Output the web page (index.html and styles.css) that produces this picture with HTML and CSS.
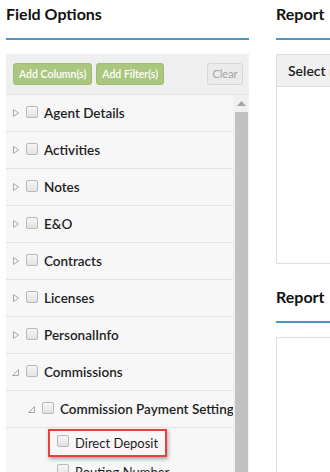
FILE: index.html
```html
<!DOCTYPE html>
<html>
<head>
<meta charset="utf-8">
<link rel="stylesheet" href="styles.css">
</head>
<body>
<div class="page">
  <section class="left">
    <h2 class="heading">Field Options</h2>
    <div class="panel">
      <div class="toolbar">
        <button class="btn btn-green">Add Column(s)</button>
        <button class="btn btn-green">Add Filter(s)</button>
        <button class="btn btn-clear">Clear</button>
      </div>
      <div class="panel-body">
        <div class="list">
          <div class="row"><svg class="tri" width="8" height="8" viewBox="0 0 8 8"><polygon points="1.5,0.5 6.5,4 1.5,7.5" /></svg><span class="cb"></span><span class="label">Agent Details</span></div>
          <div class="row"><svg class="tri" width="8" height="8" viewBox="0 0 8 8"><polygon points="1.5,0.5 6.5,4 1.5,7.5" /></svg><span class="cb"></span><span class="label">Activities</span></div>
          <div class="row"><svg class="tri" width="8" height="8" viewBox="0 0 8 8"><polygon points="1.5,0.5 6.5,4 1.5,7.5" /></svg><span class="cb"></span><span class="label">Notes</span></div>
          <div class="row"><svg class="tri" width="8" height="8" viewBox="0 0 8 8"><polygon points="1.5,0.5 6.5,4 1.5,7.5" /></svg><span class="cb"></span><span class="label">E&amp;O</span></div>
          <div class="row"><svg class="tri" width="8" height="8" viewBox="0 0 8 8"><polygon points="1.5,0.5 6.5,4 1.5,7.5" /></svg><span class="cb"></span><span class="label">Contracts</span></div>
          <div class="row"><svg class="tri" width="8" height="8" viewBox="0 0 8 8"><polygon points="1.5,0.5 6.5,4 1.5,7.5" /></svg><span class="cb"></span><span class="label">Licenses</span></div>
          <div class="row"><svg class="tri" width="8" height="8" viewBox="0 0 8 8"><polygon points="1.5,0.5 6.5,4 1.5,7.5" /></svg><span class="cb"></span><span class="label">PersonalInfo</span></div>
          <div class="row"><svg class="tri open" width="8" height="8" viewBox="0 0 8 8"><polygon points="6.5,1.5 6.5,7.5 0.5,7.5" /></svg><span class="cb"></span><span class="label">Commissions</span></div>
          <div class="row level2"><svg class="tri open" width="8" height="8" viewBox="0 0 8 8"><polygon points="6.5,1.5 6.5,7.5 0.5,7.5" /></svg><span class="cb"></span><span class="label">Commission Payment Settings</span></div>
          <div class="row leaf"><span class="highlight"><span class="cb"></span><span class="label">Direct Deposit</span></span></div>
          <div class="row leaf plain"><span class="cb"></span><span class="label">Routing Number</span></div>
        </div>
        <div class="scrollbar">
          <div class="scroll-arrow"><svg width="9" height="5" viewBox="0 0 9 5"><polygon points="4.5,0 9,5 0,5" /></svg></div>
          <div class="scroll-thumb"></div>
        </div>
      </div>
    </div>
  </section>
  <section class="right">
    <h2 class="heading">Report</h2>
    <div class="rbox">
      <div class="rbox-head">Select report</div>
    </div>
    <h2 class="heading second">Report</h2>
    <div class="rbox tall"></div>
  </section>
</div>
</body>
</html>
```
FILE: styles.css
```css
html, body {
  margin: 0;
  padding: 0;
  background: #ffffff;
  overflow: hidden;
  height: 472px;
}
body {
  font-family: Lato, "Liberation Sans", sans-serif;
  color: #1e1e1e;
}
.page {
  display: flex;
  gap: 27px;
  padding-left: 6px;
}
.left {
  flex: none;
  width: 243px;
}
.right {
  flex: none;
  width: 120px;
}
.heading {
  margin: 0;
  font-size: 16px;
  font-weight: 700;
  line-height: 22px;
  padding: 3px 0 13px;
  border-bottom: 2px solid #4f97c3;
  color: #111;
}
.panel {
  margin-top: 14px;
  background: #f7f7f7;
}
.toolbar {
  display: flex;
  align-items: center;
  height: 40px;
  padding: 0 6px 0 7px;
  gap: 4px;
  background: #efefef;
  border-bottom: 1px solid #e2e2e2;
}
.btn {
  height: 22px;
  padding: 0 5px;
  border-radius: 3px;
  font-family: Lato, "Liberation Sans", sans-serif;
  font-size: 10.5px;
  font-weight: 600;
  line-height: 20px;
  box-sizing: border-box;
}
.btn-green {
  background: #a9c77e;
  border: 1px solid #9dbd72;
  color: #ffffff;
}
.btn-clear {
  margin-left: auto;
  width: 36px;
  padding: 0;
  background: #ebebeb;
  border: 1px solid #d6d6d6;
  color: #a3a3a3;
  font-weight: 400;
  font-size: 11px;
}
.panel-body {
  display: flex;
  height: 377px;
}
.list {
  flex: 1;
  min-width: 0;
  overflow: hidden;
}
.row {
  display: flex;
  align-items: center;
  height: 36px;
  border-bottom: 1px solid #e3e3e3;
  padding-left: 6px;
  white-space: nowrap;
  font-size: 13.5px;
  font-weight: 600;
}
.row.level2 {
  padding-left: 22px;
}
.row.leaf {
  height: 29px;
  border-bottom: none;
  padding-left: 42px;
  font-weight: 400;
  font-size: 13px;
}
.row.leaf.plain {
  padding-left: 51px;
}
.tri {
  flex: none;
  margin-right: 6px;
  fill: none;
  stroke: #a8a8a8;
  stroke-width: 1;
}
.cb {
  flex: none;
  width: 12px;
  height: 12px;
  box-sizing: border-box;
  border: 1px solid #b8b8b8;
  border-radius: 2px;
  background: linear-gradient(#f6f6f6, #e2e2e2);
  margin-right: 6px;
  margin-top: -3px;
}
.label {
  color: #1e1e1e;
}
.highlight {
  display: flex;
  align-items: center;
  height: 28px;
  box-sizing: border-box;
  padding: 0 7px;
  border: 2px solid #e8403f;
  box-shadow: 1px 2px 4px rgba(0, 0, 0, 0.35);
}
.scrollbar {
  flex: none;
  width: 16px;
  display: flex;
  flex-direction: column;
  background: #f0f0f0;
}
.scroll-arrow {
  height: 17px;
  display: flex;
  align-items: center;
  justify-content: center;
  fill: #a3a3a3;
}
.scroll-thumb {
  flex: 1;
  margin: 0 1px 0 2px;
  background: #c1c1c1;
}
.rbox {
  margin-top: 14px;
  height: 210px;
  box-sizing: border-box;
  border: 1px solid #dcdcdc;
  overflow: hidden;
}
.rbox-head {
  height: 32px;
  box-sizing: border-box;
  background: #f0f0f0;
  border-bottom: 1px solid #dcdcdc;
  padding-left: 11px;
  font-size: 14px;
  font-weight: 600;
  line-height: 31px;
  white-space: nowrap;
}
.heading.second {
  margin-top: 19px;
}
.rbox.tall {
  height: 200px;
}
```
